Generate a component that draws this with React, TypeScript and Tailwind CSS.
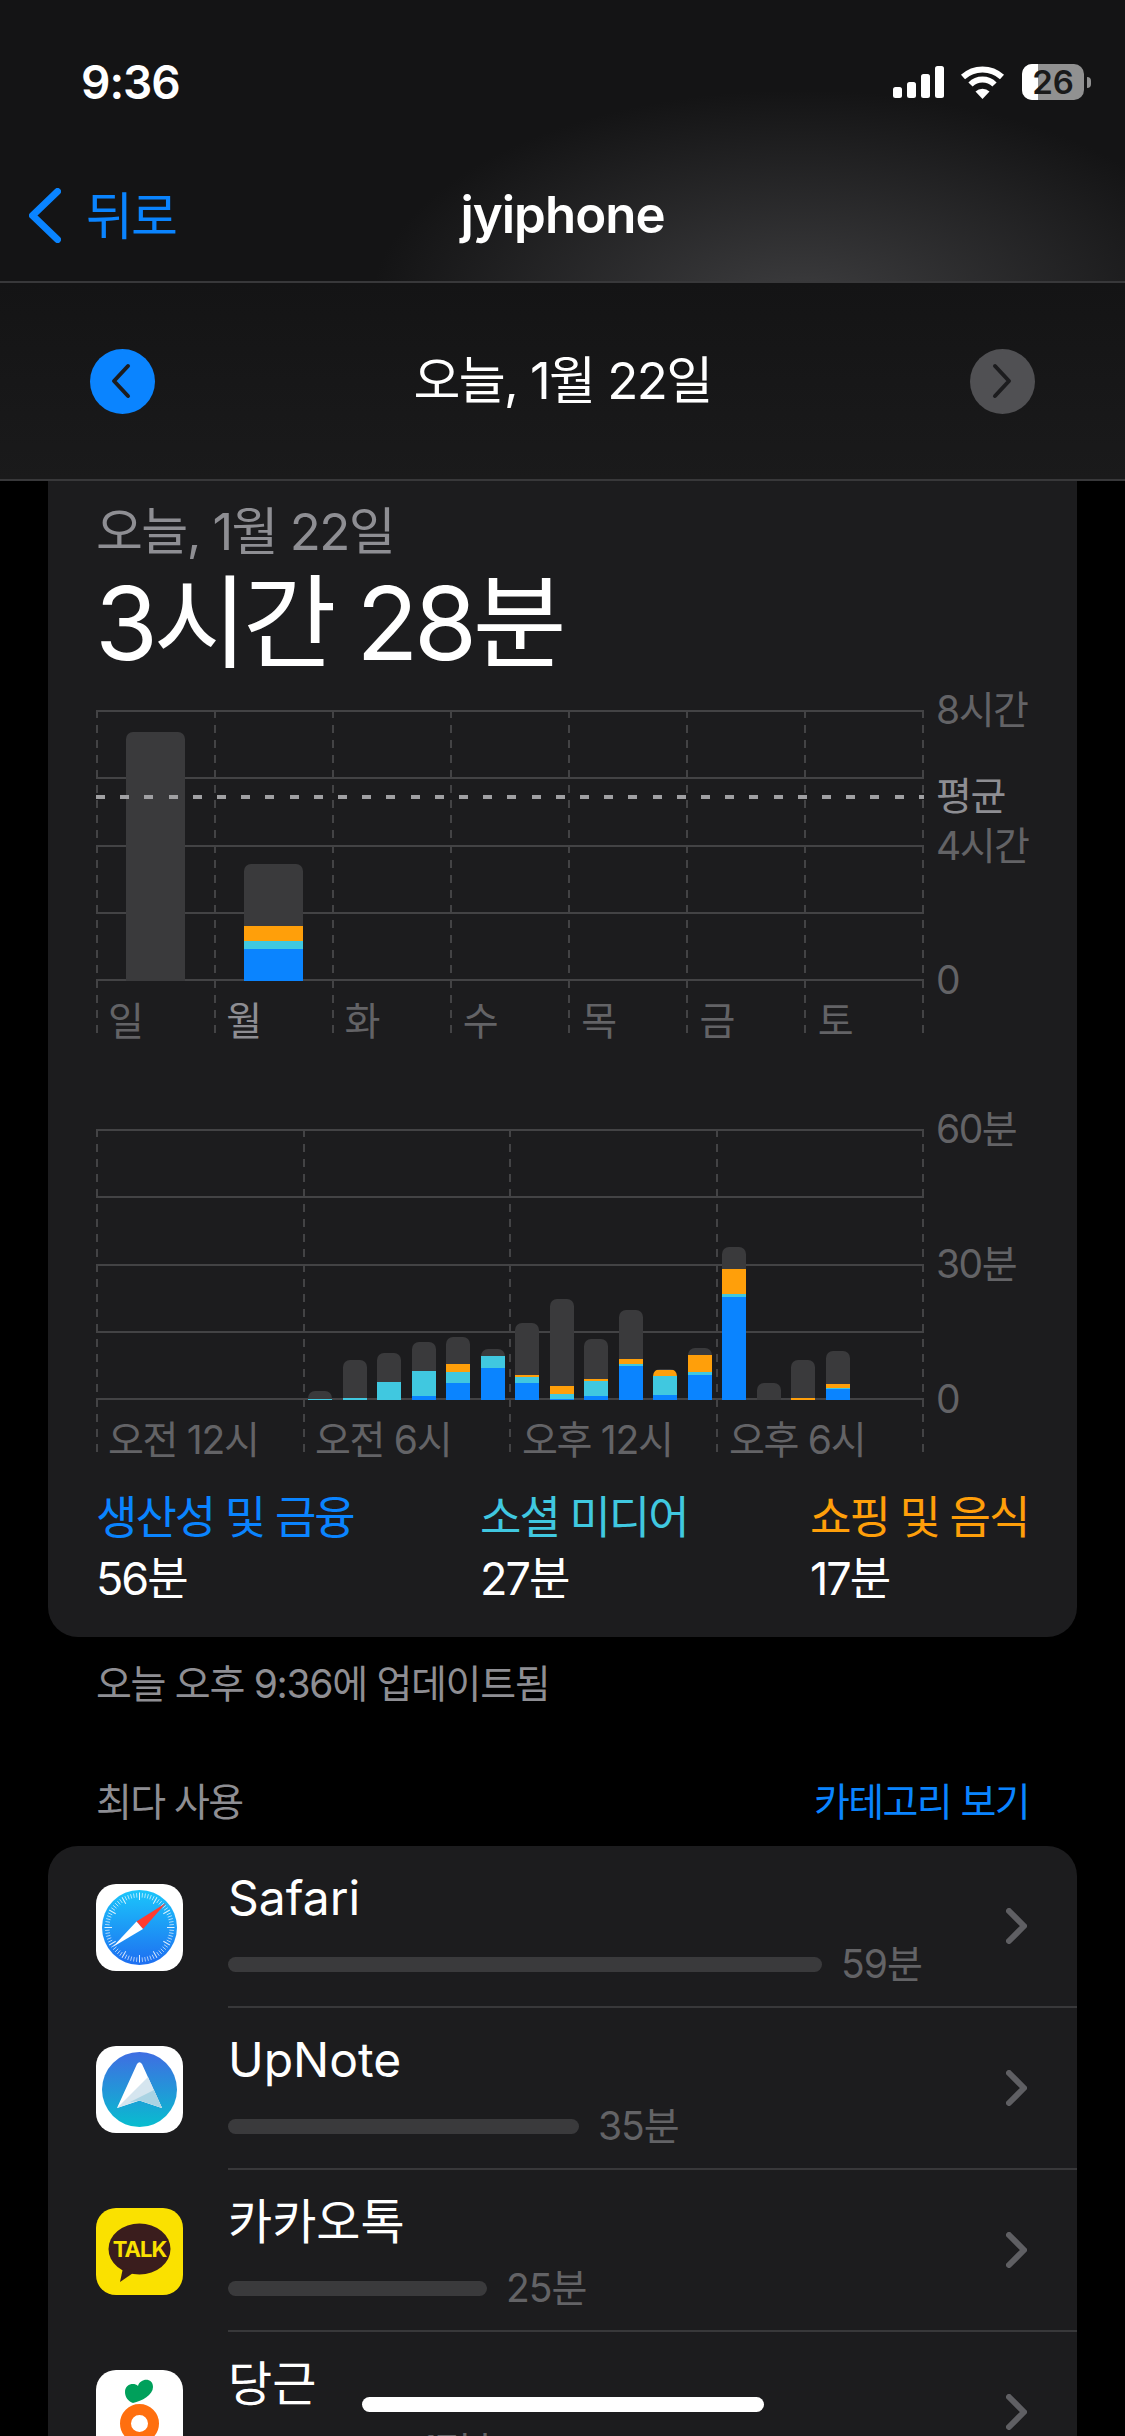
const dash = "w-[2px] h-full bg-[repeating-linear-gradient(to_bottom,#434345_0,#434345_8px,transparent_8px,transparent_15px)]";

const weekBars = [
  { gray: 249, orange: 0, cyan: 0, blue: 0 },
  { gray: 62, orange: 15, cyan: 8, blue: 32 },
];

// 오전 6시부터 오후 9시까지, 높이는 px
const hourBars = [
  { gray: 8, orange: 0, cyan: 1, blue: 0 },
  { gray: 38, orange: 0, cyan: 2, blue: 0 },
  { gray: 29, orange: 0, cyan: 18, blue: 0 },
  { gray: 29, orange: 0, cyan: 25, blue: 4 },
  { gray: 27, orange: 8, cyan: 11, blue: 17 },
  { gray: 7, orange: 0, cyan: 12, blue: 32 },
  { gray: 52, orange: 2, cyan: 6, blue: 17 },
  { gray: 87, orange: 8, cyan: 5, blue: 1 },
  { gray: 40, orange: 2, cyan: 15, blue: 4 },
  { gray: 49, orange: 5, cyan: 2, blue: 34 },
  { gray: 1, orange: 6, cyan: 19, blue: 5 },
  { gray: 7, orange: 17, cyan: 3, blue: 25 },
  { gray: 22, orange: 25, cyan: 3, blue: 103 },
  { gray: 17, orange: 0, cyan: 0, blue: 0 },
  { gray: 38, orange: 2, cyan: 0, blue: 0 },
  { gray: 33, orange: 4, cyan: 1, blue: 11 },
];

type Seg = { gray: number; orange: number; cyan: number; blue: number };

function StackedBar({ bar, wide }: { bar: Seg; wide?: boolean }) {
  return (
    <div className={`${wide ? "w-[59px] rounded-t-[7px]" : "w-[24px] rounded-t-[7px]"} flex flex-col overflow-hidden`}>
      <div className="bg-[#3a3a3c]" style={{ height: bar.gray }} />
      <div className="bg-[#ff9f0a]" style={{ height: bar.orange }} />
      <div className="bg-[#40c8e0]" style={{ height: bar.cyan }} />
      <div className="bg-[#0a84ff]" style={{ height: bar.blue }} />
    </div>
  );
}

function ChartFrame({ columns, children, labels }: { columns: number; children: React.ReactNode; labels: React.ReactNode }) {
  return (
    <div className="relative w-[828px] h-[330px]">
      {/* 격자 */}
      <div className="absolute top-0 left-0 right-0 h-[271px] flex flex-col justify-between">
        {[0, 1, 2, 3, 4].map((i) => (
          <div key={i} className="h-[2px] bg-[#434345]" />
        ))}
      </div>
      <div className="absolute inset-0 flex justify-between">
        {Array.from({ length: columns + 1 }).map((_, i) => (
          <div key={i} className={dash} />
        ))}
      </div>
      <div className="relative h-[271px]">{children}</div>
      <div className="relative mt-[16px]">{labels}</div>
    </div>
  );
}

function AxisLabel({ top, text, light }: { top: string; text: string; light?: boolean }) {
  return (
    <div className={`absolute left-[840px] ${top} -translate-y-1/2 text-[39px] leading-[48px] tracking-[-1.5px] whitespace-nowrap ${light ? "text-[#8e8e93]" : "text-[#636366]"}`}>
      {text}
    </div>
  );
}

function SafariIcon() {
  return (
    <svg width="75" height="75" viewBox="0 0 75 75">
      <defs>
        <linearGradient id="safariBg" x1="0" y1="0" x2="0" y2="1">
          <stop offset="0" stopColor="#1bc6fb" />
          <stop offset="1" stopColor="#1e6ef1" />
        </linearGradient>
      </defs>
      <circle cx="37.5" cy="37.5" r="37.5" fill="url(#safariBg)" />
      {Array.from({ length: 72 }).map((_, i) => (
        <line
          key={i}
          x1="37.5"
          y1={i % 6 === 0 ? 2.5 : 3}
          x2="37.5"
          y2={i % 6 === 0 ? 10 : 7.5}
          stroke="#fff"
          strokeWidth={i % 6 === 0 ? 1 : 0.7}
          opacity={0.85}
          transform={`rotate(${i * 5} 37.5 37.5)`}
        />
      ))}
      <polygon points="64,13 34.5,31.5 41,39" fill="#ff3b30" />
      <polygon points="10.7,57 34.5,31.5 41,39" fill="#fff" />
    </svg>
  );
}

function UpNoteIcon() {
  return (
    <svg width="75" height="75" viewBox="0 0 75 75">
      <defs>
        <linearGradient id="upnoteBg" x1="0" y1="0" x2="0" y2="1">
          <stop offset="0" stopColor="#3f6de2" />
          <stop offset="1" stopColor="#08bdcf" />
        </linearGradient>
      </defs>
      <circle cx="37.5" cy="37.5" r="37.5" fill="url(#upnoteBg)" />
      <path d="M35 12 Q37.5 8.5 40 12 L60 56 L37.5 48.5 L15 56 Z" fill="#fff" />
      <polygon points="46,25 15,56 37.5,48.5 60,56" fill="#d5e5ef" />
      <polygon points="52,38 60,56 37.5,48.5 27,50.5" fill="#aad3e3" />
    </svg>
  );
}

function KakaoIcon() {
  return (
    <svg width="87" height="87" viewBox="0 0 87 87">
      <ellipse cx="43.5" cy="41" rx="31" ry="25.5" fill="#3a1d1d" />
      <path d="M27 60 L24 74 L40 63 Z" fill="#3a1d1d" />
      <text x="43.5" y="49" textAnchor="middle" fontSize="22" fontWeight="700" letterSpacing="-1" fill="#fae100" fontFamily="Inter, sans-serif">
        TALK
      </text>
    </svg>
  );
}

function CarrotIcon() {
  return (
    <svg width="87" height="87" viewBox="0 0 87 87">
      <path d="M29 22 C29 14 38 12 42 16 C44 8 57 7 57 17 C57 25 46 31 37 33 C32 31 29 27 29 22 Z" fill="#00a05b" />
      <circle cx="43.5" cy="53.5" r="14" fill="none" stroke="#ff6f0f" strokeWidth="11" />
    </svg>
  );
}

const apps = [
  { name: "Safari", minutes: "59분", width: 594, icon: <SafariIcon />, bg: "bg-white" },
  { name: "UpNote", minutes: "35분", width: 351, icon: <UpNoteIcon />, bg: "bg-white" },
  { name: "카카오톡", minutes: "25분", width: 259, icon: <KakaoIcon />, bg: "bg-[#fae100]" },
  { name: "당근", minutes: "17분", width: 174, icon: <CarrotIcon />, bg: "bg-white" },
];

const hourCols = Array.from({ length: 24 });

export default function App() {
  return (
    <div className="relative w-[1125px] h-[2436px] overflow-hidden bg-black text-white font-[Inter,'Noto_Sans_CJK_KR',sans-serif]">
      {/* 상단 바 */}
      <div className="h-[283px] border-b-2 border-[#38383a] bg-[radial-gradient(ellipse_430px_220px_at_800px_310px,#3e3e40,#141415)]">
        <div className="h-[164px] flex items-center justify-between pl-[81px] pr-[34px]">
          <span className="text-[46px] tracking-[-1px] font-semibold leading-none">9:36</span>
          <div className="flex items-center">
            <svg width="51" height="32" viewBox="0 0 51 32" fill="#fff">
              <rect x="0" y="21" width="9" height="11" rx="2.5" />
              <rect x="14" y="16" width="9" height="16" rx="2.5" />
              <rect x="28" y="8" width="9" height="24" rx="2.5" />
              <rect x="42" y="0" width="9" height="32" rx="2.5" />
            </svg>
            <svg className="ml-[16px]" width="45" height="33" viewBox="0 0 45 33" fill="none" stroke="#fff" strokeWidth="6">
              <path d="M3 11 A29 29 0 0 1 42 11" />
              <path d="M10.5 18.5 A17 17 0 0 1 34.5 18.5" />
              <path d="M22.5 33 L15.5 25.5 A10 10 0 0 1 29.5 25.5 Z" fill="#fff" stroke="none" />
            </svg>
            <div className="ml-[17px] relative w-[62px] h-[36px] rounded-[10px] overflow-hidden bg-[#919191] flex items-center justify-center">
              <div className="absolute left-0 top-0 bottom-0 w-[16px] bg-white" />
              <span className="relative text-[33px] font-semibold leading-none text-[#1a1a1a]">26</span>
            </div>
            <div className="ml-[3px] w-[4px] h-[11px] rounded-r-full bg-[#919191]" />
          </div>
        </div>
        <div className="h-[102px] grid grid-cols-3 items-center">
          <div className="flex items-center pl-[29px]">
            <svg width="32" height="55" viewBox="0 0 32 55" fill="none" stroke="#0a84ff" strokeWidth="7" strokeLinecap="round" strokeLinejoin="round">
              <path d="M28.5 3.5 L3.5 27.5 L28.5 51.5" />
            </svg>
            <span className="ml-[25px] pt-[3px] text-[51px] leading-[60px] tracking-[-2px] text-[#0a84ff]">뒤로</span>
          </div>
          <div className="text-center text-[51px] leading-[60px] tracking-[-1px] font-semibold">jyiphone</div>
        </div>
      </div>

      {/* 날짜 선택 */}
      <div className="h-[198px] px-[90px] flex items-center justify-between border-b-2 border-[#38383a] bg-gradient-to-b from-[#141415] to-[#1a1a1b]">
        <div className="w-[65px] h-[65px] rounded-full bg-[#0a84ff] flex items-center justify-center pr-[3px]">
          <svg width="20" height="36" viewBox="0 0 20 36" fill="none" stroke="#1c1c1e" strokeWidth="4" strokeLinecap="round" strokeLinejoin="round">
            <path d="M17 3 L3 18 L17 33" />
          </svg>
        </div>
        <span className="text-[51px] leading-[60px] tracking-[-1.6px]">오늘, 1월 22일</span>
        <div className="w-[65px] h-[65px] rounded-full bg-[#505053] flex items-center justify-center">
          <svg width="20" height="36" viewBox="0 0 20 36" fill="none" stroke="#1c1c1e" strokeWidth="4" strokeLinecap="round" strokeLinejoin="round">
            <path d="M3 3 L17 18 L3 33" />
          </svg>
        </div>
      </div>

      {/* 요약 카드 */}
      <div className="mx-[48px] px-[48px] pt-[21px] pb-[28px] bg-[#1c1c1e] rounded-b-[30px]">
        <div className="text-[51px] leading-[60px] tracking-[-1.6px] text-[#8e8e93]">오늘, 1월 22일</div>
        <div className="-ml-[1px] text-[102px] leading-[120px] tracking-[-4.5px] mt-px">3시간 28분</div>

        <div className="mt-[27px]">
          <ChartFrame
            columns={7}
            labels={
              <div className="grid grid-cols-7 text-[39px] leading-[48px] text-[#636366]">
                <span className="pl-[12px]">일</span>
                <span className="pl-[12px] text-[#8e8e93]">월</span>
                <span className="pl-[12px]">화</span>
                <span className="pl-[12px]">수</span>
                <span className="pl-[12px]">목</span>
                <span className="pl-[12px]">금</span>
                <span className="pl-[12px]">토</span>
              </div>
            }
          >
            <div className="grid grid-cols-7 h-full items-end">
              {weekBars.map((bar, i) => (
                <div key={i} className="flex justify-center">
                  <StackedBar bar={bar} wide />
                </div>
              ))}
            </div>
            {/* 평균선 */}
            <div className="absolute left-0 right-0 top-[85px] h-[4px] bg-[repeating-linear-gradient(to_right,#a0a0a3_0,#a0a0a3_9px,transparent_9px,transparent_24.2px)]" />
          </ChartFrame>
          <AxisWeek />
        </div>

        <div className="mt-[89px]">
          <ChartFrame
            columns={4}
            labels={
              <div className="grid grid-cols-4 text-[39px] leading-[48px] tracking-[-1.3px] text-[#636366]">
                <span className="pl-[12px]">오전 12시</span>
                <span className="pl-[12px]">오전 6시</span>
                <span className="pl-[12px]">오후 12시</span>
                <span className="pl-[12px]">오후 6시</span>
              </div>
            }
          >
            <div className="grid grid-cols-24 h-full items-end">
              {hourCols.map((_, i) => {
                const bar = hourBars[i - 6];
                return (
                  <div key={i} className="flex justify-center">
                    {bar && <StackedBar bar={bar} />}
                  </div>
                );
              })}
            </div>
          </ChartFrame>
          <AxisHour />
        </div>

        <div className="mt-[29px] flex text-[45px] leading-[60px] tracking-[-2px]">
          <div className="w-[384px] shrink-0">
            <div className="text-[#0a84ff]">생산성 및 금융</div>
            <div className="mt-[1px]">56분</div>
          </div>
          <div className="w-[330px] shrink-0">
            <div className="text-[#40c8e0]">소셜 미디어</div>
            <div className="mt-[1px]">27분</div>
          </div>
          <div className="whitespace-nowrap">
            <div className="text-[#ff9f0a]">쇼핑 및 음식</div>
            <div className="mt-[1px]">17분</div>
          </div>
        </div>
      </div>

      <div className="mt-[23px] px-[96px] text-[39px] leading-[48px] tracking-[-1.3px] text-[#8e8e93]">오늘 오후 9:36에 업데이트됨</div>

      <div className="mt-[70px] px-[96px] flex justify-between text-[39px] leading-[48px] tracking-[-1.6px]">
        <span className="text-[#8e8e93]">최다 사용</span>
        <span className="text-[#0a84ff]">카테고리 보기</span>
      </div>

      {/* 앱 목록 */}
      <div className="mt-[20px] mx-[48px] bg-[#1c1c1e] rounded-[30px] overflow-hidden">
        {apps.map((app) => (
          <div key={app.name} className="h-[162px] flex items-center pl-[48px]">
            <div className={`w-[87px] h-[87px] shrink-0 rounded-[20px] flex items-center justify-center ${app.bg}`}>{app.icon}</div>
            <div className="ml-[45px] flex-1 h-full flex items-center pr-[50px] border-b-2 border-[#38383a]">
              <div className="flex-1 pt-[4px]">
                <div className="text-[48px] leading-[60px] pb-[12px]">{app.name}</div>
                <div className="flex items-center">
                  <div className="h-[15px] rounded-full bg-[#3a3a3c]" style={{ width: app.width }} />
                  <span className="ml-[19px] text-[39px] leading-[48px] tracking-[-1px] text-[#636366]">{app.minutes}</span>
                </div>
              </div>
              <svg width="21" height="36" viewBox="0 0 21 36" fill="none" stroke="#5f5f63" strokeWidth="6" strokeLinecap="round" strokeLinejoin="round">
                <path d="M3 3 L18 18 L3 33" />
              </svg>
            </div>
          </div>
        ))}
      </div>

      {/* 홈 인디케이터 */}
      <div className="absolute left-[362px] top-[2397px] w-[402px] h-[15px] rounded-full bg-white" />
    </div>
  );
}

function AxisWeek() {
  return (
    <div className="relative h-0 -top-[330px]">
      <AxisLabel top="top-0" text="8시간" />
      <AxisLabel top="top-[86px]" text="평균" light />
      <AxisLabel top="top-[136px]" text="4시간" />
      <AxisLabel top="top-[270px]" text="0" />
    </div>
  );
}

function AxisHour() {
  return (
    <div className="relative h-0 -top-[330px]">
      <AxisLabel top="top-0" text="60분" />
      <AxisLabel top="top-[135px]" text="30분" />
      <AxisLabel top="top-[270px]" text="0" />
    </div>
  );
}
